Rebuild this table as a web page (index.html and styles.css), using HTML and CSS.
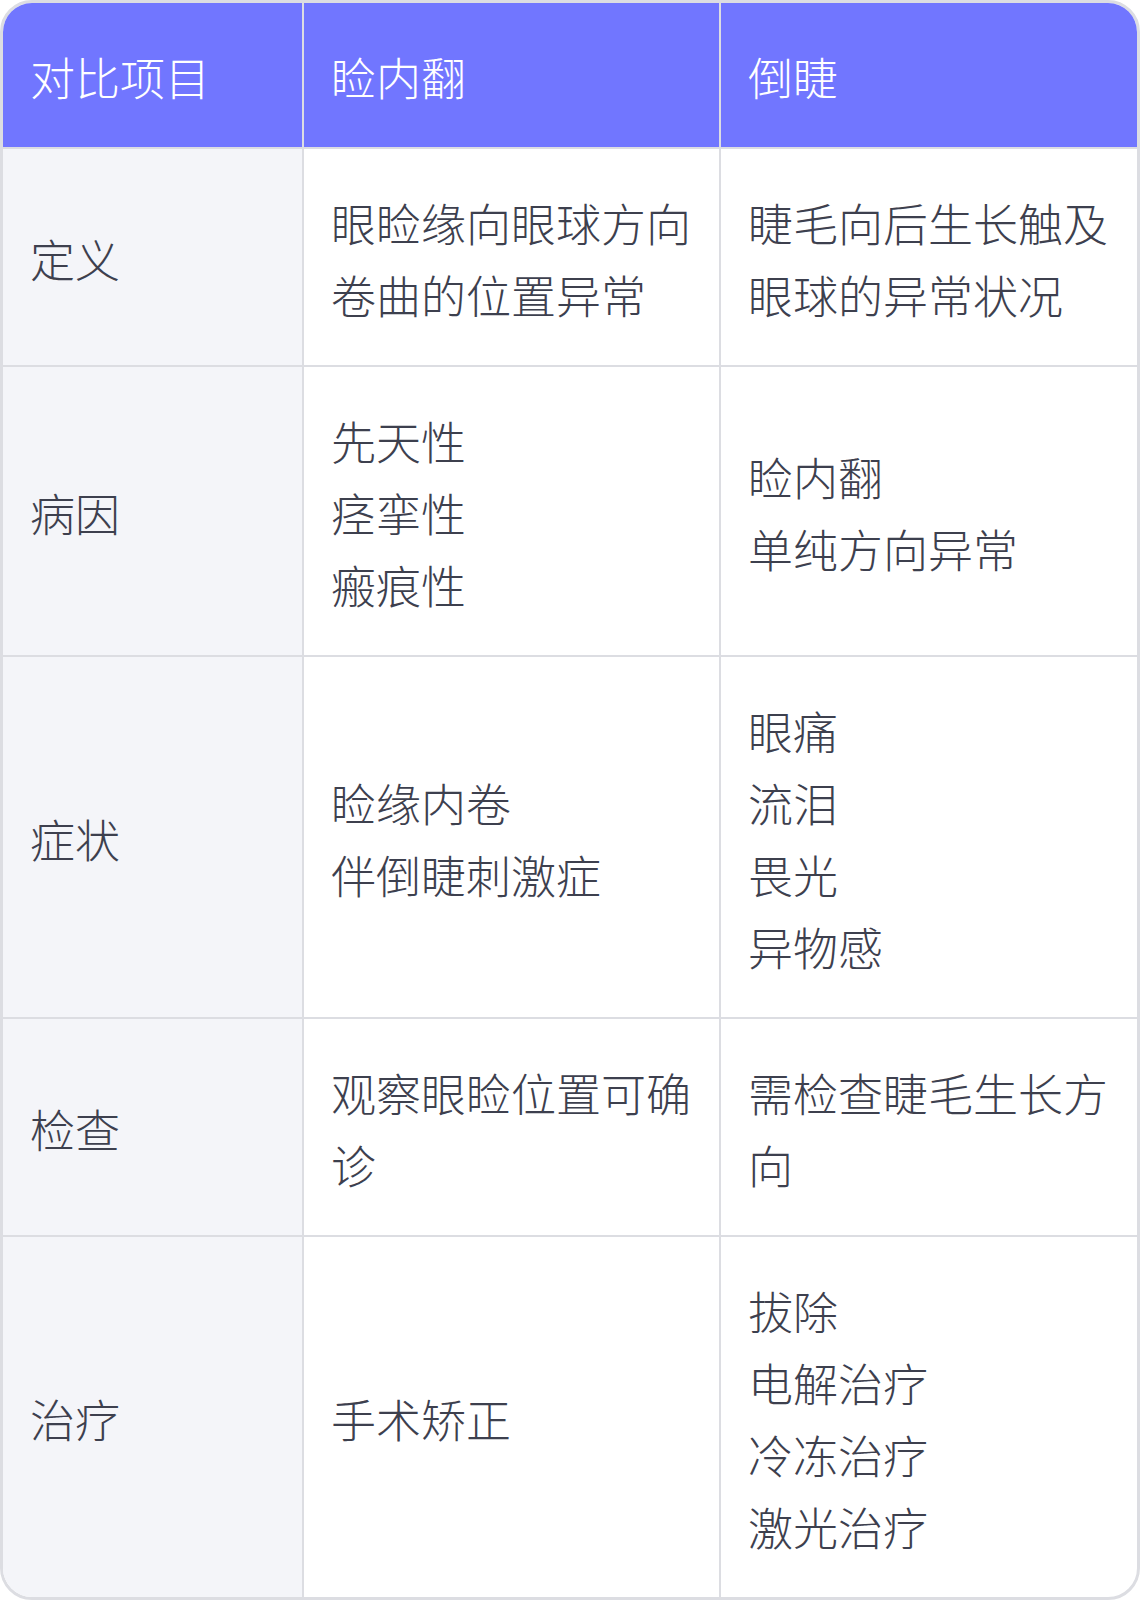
FILE: index.html
```html
<!DOCTYPE html>
<html lang="zh-CN">
<head>
<meta charset="utf-8">
<link rel="stylesheet" href="styles.css">
</head>
<body>
<div class="wrap">
<table class="cmp">
<colgroup><col class="c1"><col class="c2"><col class="c3"></colgroup>
<thead>
<tr><th>对比项目</th><th>睑内翻</th><th>倒睫</th></tr>
</thead>
<tbody>
<tr><td>定义</td><td>眼睑缘向眼球方向卷曲的位置异常</td><td>睫毛向后生长触及眼球的异常状况</td></tr>
<tr><td>病因</td><td>先天性<br>痉挛性<br>瘢痕性</td><td>睑内翻<br>单纯方向异常</td></tr>
<tr><td>症状</td><td>睑缘内卷<br>伴倒睫刺激症</td><td>眼痛<br>流泪<br>畏光<br>异物感</td></tr>
<tr><td>检查</td><td>观察眼睑位置可确诊</td><td>需检查睫毛生长方向</td></tr>
<tr><td>治疗</td><td>手术矫正</td><td>拔除<br>电解治疗<br>冷冻治疗<br>激光治疗</td></tr>
</tbody>
</table>
</div>
</body>
</html>
```
FILE: styles.css
```css
html, body {
  margin: 0;
  padding: 0;
  background: #ffffff;
}
.wrap {
  width: 1140px;
  height: 1600px;
  box-sizing: border-box;
  border: 3px solid #dcdde2;
  border-radius: 32px;
  overflow: hidden;
  background: #ffffff;
}
.cmp {
  width: 100%;
  border-collapse: collapse;
  table-layout: fixed;
  font-family: "Noto Sans CJK SC", "Noto Sans", sans-serif;
  font-weight: 300;
  font-size: 45px;
  line-height: 72px;
  color: #3d404e;
}
.c1 { width: 300px; }
.c2 { width: 417px; }
.c3 { width: 417px; }
.cmp th, .cmp td {
  padding: 38px 27px 34px;
  text-align: left;
  vertical-align: middle;
  border: 2px solid #dcdde2;
  font-weight: 300;
}
.cmp th {
  background: #7176ff;
  color: #ffffff;
}
.cmp tr:first-child th, .cmp tr:first-child td { border-top: 0; }
.cmp tbody tr:last-child td { border-bottom: 0; }
.cmp th:first-child, .cmp td:first-child { border-left: 0; }
.cmp th:last-child, .cmp td:last-child { border-right: 0; }
.cmp td:first-child {
  background: #f4f5f9;
}
```
